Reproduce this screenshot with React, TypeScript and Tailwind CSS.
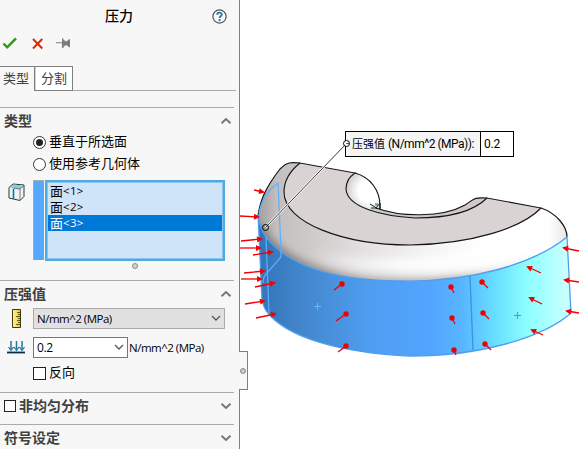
import React from "react";

const UI = "font-['Open_Sans','Noto_Sans_CJK_SC',sans-serif]";

function Chevron({ up = false }: { up?: boolean }) {
  return (
    <svg viewBox="0 0 12 8" className="h-2 w-3 shrink-0" fill="none">
      <path d={up ? "M1.500 6.200 6 2l4.500 4.200" : "M1.500 1.800 6 6l4.500-4.200"} stroke="#767676" strokeWidth="2" />
    </svg>
  );
}

function SectionHead({ title, up, check }: { title: string; up?: boolean; check?: boolean }) {
  return (
    <div className="mr-[5px] flex h-[31px] items-center border-t border-[#aaaaaa] pr-[2px] pb-1 pl-1">
      {check && <span className="mr-[3px] h-3 w-3 border border-[#222] bg-white" />}
      <h2 className="-mt-px flex-1 text-[14px] leading-5 font-bold text-[#404040]">{title}</h2>
      <Chevron up={up} />
    </div>
  );
}

function Radio({ label, checked }: { label: string; checked?: boolean }) {
  return (
    <label className="flex h-[22px] items-center gap-[3px] pl-[33px] text-[13px] text-black">
      <span className="flex h-[13px] w-[13px] items-center justify-center rounded-full border border-[#333] bg-white">
        {checked && <span className="h-[7px] w-[7px] rounded-full bg-[#222]" />}
      </span>
      {label}
    </label>
  );
}

function FaceRow({ n, selected }: { n: number; selected?: boolean }) {
  return (
    <div className={selected ? "flex h-4 items-center bg-[#0078d7] pl-[2px] leading-4 text-white" : "flex h-4 items-center pl-[2px] leading-4"}>
      <span className="font-['Noto_Sans_CJK_SC',sans-serif] text-[13px] leading-4">面</span>
      <span className="text-[11.500px] tracking-[0.3px]">&lt;{n}&gt;</span>
    </div>
  );
}

function Panel() {
  return (
    <aside className="h-full w-[240px] shrink-0 border-r border-[#808080] bg-[#f7f7f7]">
      <header className="flex h-8 items-center pr-3 pl-[26px]">
        <h1 className="-mt-px flex-1 text-center text-[14px] leading-5 font-medium text-black">压力</h1>
        <svg viewBox="0 0 15 15" className="h-[15px] w-[15px]" fill="none">
          <circle cx="7.500" cy="7.500" r="6.600" fill="#fafafa" stroke="#4b5358" strokeWidth="1.200" />
          <path d="M5.200 5.700c.1-2.800 4.700-2.700 4.600-.1 0 1.600-2.200 1.700-2.200 3.300" stroke="#1d78a5" strokeWidth="1.900" />
          <rect x="6.600" y="10.100" width="2" height="2" fill="#1d78a5" />
        </svg>
      </header>
      <div className="flex h-[34px] pt-[5px] pl-[2px]">
        <svg viewBox="0 0 70 14" className="h-[14px] w-[70px]" fill="none">
          <path d="m1.500 6.500 3.700 3.800L14 1.300" stroke="#2f9a12" strokeWidth="2.500" />
          <path d="m31 2 9.300 9.500M40.300 2 31 11.500" stroke="#de2604" strokeWidth="2" />
          <path d="M54 5.300h6V1.500h1.500V3l3 1.500L67 2.200h1v8h-1l-2.500-2.300-3 1.500V11H60V6.300h-6Z" fill="#7d7d7d" />
        </svg>
      </div>
      <nav className="mr-[3px] flex h-[25px] border-b border-[#aaaaaa] text-[13px] text-[#404040]">
        <div className="-mb-px h-[25px] w-[34px] border-t border-[#808080] bg-[#f7f7f7] pl-[3px] leading-[23px]">类型</div>
        <div className="-mb-px h-[25px] w-[39px] border border-[#808080] bg-white pl-[6px] leading-[22px] shadow-[inset_1px_0_#d2d2d2]">分割</div>
      </nav>

      <section className="mt-4 h-[173px]">
        <SectionHead title="类型" up />
        <div className="-mt-[7px]">
          <Radio label="垂直于所选面" checked />
          <Radio label="使用参考几何体" />
        </div>
        <div className="mt-[5px] flex pl-2">
          <svg viewBox="0 0 17 19" className="mt-[3px] h-[19px] w-[17px]" strokeLinejoin="round">
            <path d="M1 4.500 5 1l11 1v11.500L12 17.500 1 15Z" fill="#f1f3f3" stroke="#29363b" />
            <path d="m1.500 4.500 3.700-3L15.500 2.500 12 6Z" fill="#86cce4" />
            <path d="M6 5.200 12 6l4-3.500M12 6v11.500" fill="none" stroke="#4f5f65" strokeWidth=".8" />
            <path d="M5.500 5.500v10.500" stroke="#087ba5" strokeWidth="1.600" />
          </svg>
          <div className="ml-2 h-20 w-[11px] border-t border-l border-[#aaa] bg-[#56a8ff]" />
          <div className="ml-px h-[81px] w-[180px] border-2 border-[#50a9df] bg-[#cfe4f8] text-[12px] text-black">
            <div className="h-full border border-[#88c4ed]">
              <FaceRow n={1} />
              <FaceRow n={2} />
              <FaceRow n={3} selected />
            </div>
          </div>
        </div>
        <div className="mt-[2px] ml-[132px] h-[6px] w-[6px] rounded-full border border-[#888] bg-[#d4d4d4]" />
      </section>

      <section className="h-[112px]">
        <SectionHead title="压强值" up />
        <div className="-mt-[3px] flex h-[21px] items-center">
          <svg viewBox="0 0 9 19" className="ml-3 h-[19px] w-[9px]">
            <defs><linearGradient id="ruler"><stop stopColor="#fff4a0" /><stop offset="1" stopColor="#edc925" /></linearGradient></defs>
            <path d="M.5.5h8v18h-8Z" fill="url(#ruler)" stroke="#40380a" />
            <path d="M5 3.500h3M6 5.500h2M4 7.500h4M6 9.500h2M5 11.500h3M6 13.500h2M4 15.500h4" stroke="#40380a" strokeWidth=".8" />
          </svg>
          <div className="ml-3 flex h-[21px] w-[192px] items-center justify-between border border-[#aaa] bg-[#e1e1e1] px-[3px] text-[12px] text-black">
            <span className="text-[11.500px] tracking-[-0.5px]">N/mm^2 (MPa)</span>
            <svg viewBox="0 0 10 7" className="h-[7px] w-[10px]" fill="none"><path d="m1 1 4 4 4-4" stroke="#555" strokeWidth="1.300" /></svg>
          </div>
        </div>
        <div className="mt-2 flex h-[21px] items-center text-[12px] text-black">
          <svg viewBox="0 0 18 13" className="ml-[7px] h-[13px] w-[18px]">
            <path d="M4 0v8M9.500 0v8M15 0v8" stroke="#2278a5" strokeWidth="1.500" />
            <path d="m1.500 6 2.500 3.500L6.500 6m.5 0 2.500 3.500L12 6m.5 0L15 9.500 17.500 6" fill="none" stroke="#2278a5" strokeWidth="1.200" />
            <path d="M0 11.500h18" stroke="#102c3c" strokeWidth="1.800" />
          </svg>
          <div className="ml-2 flex h-[21px] w-[95px] items-center justify-between border border-[#777] bg-white px-[3px]">
            <span className="tracking-[-0.4px]">0.2</span>
            <svg viewBox="0 0 10 7" className="h-[7px] w-[10px]" fill="none"><path d="m1 1 4 4 4-4" stroke="#555" strokeWidth="1.300" /></svg>
          </div>
          <span className="ml-px text-[11.500px] tracking-[-0.5px]">N/mm^2 (MPa)</span>
        </div>
        <label className="mt-[5px] flex h-5 items-center gap-[3px] pl-[33px] text-[13px] text-black">
          <span className="h-[13px] w-[13px] border border-[#222] bg-white" />反向
        </label>
      </section>
      <section className="h-8"><SectionHead title="非均匀分布" check /></section>
      <section><SectionHead title="符号设定" /></section>
    </aside>
  );
}

type ArrowData = [number, number, number, number];

const arrows: ArrowData[] = [
  [254, 190, 263, 192], [240, 216, 258, 217], [241, 241, 261, 239], [240, 248, 260, 248],
  [253, 255, 272, 252], [244, 273, 264, 271], [241, 279, 261, 279], [255, 287, 274, 283],
  [245, 304, 264, 301], [256, 318, 275, 314], [334, 290, 342, 284], [336, 321, 346, 314],
  [338, 352, 346, 346], [454, 293, 451, 287], [455, 324, 452, 318], [456, 355, 454, 350],
  [488, 288, 482, 282], [489, 319, 483, 313], [491, 350, 485, 344], [541, 273, 528, 267],
  [542, 304, 530, 298], [543, 335, 532, 330], [579, 251, 564, 248], [579, 282, 565, 280],
  [579, 313, 567, 311],
];

function Arrow({ a }: { a: ArrowData }) {
  const [x1, y1, x2, y2] = a;
  const angle = (Math.atan2(y2 - y1, x2 - x1) * 180) / Math.PI;
  const facing = x1 > 330 && x1 < 500;
  return (
    <g stroke="#f20000" fill="#f20000">
      <path d={`M${x1} ${y1}L${x2} ${y2}`} strokeWidth="1.300" />
      {facing ? <circle cx={x2} cy={y2} r="2.700" stroke="none" /> : (
        <path d="M2 0-4-3v6Z" stroke="none" transform={`translate(${x2} ${y2}) rotate(${angle})`} />
      )}
    </g>
  );
}

const band = "M258 214C259 222 261 230 266 237C286 263 325 280 397 281C472 283 535 263 567 237L571 313C544 337 482 356 410 356C340 353 287 337 268 313C264 309 263 304 262 300Z";
const topFace = "M300 163C290 171 284 181 284 192C284 223 344 245 410 245C472 244 522 228 541 208L487 198C472 213 444 218 415 218C381 216 347 207 346 189C346 183 349 177 355 173Z";
const body = "M258 216C260 200 266 187 280 169C287 162 291 162 300 163L355 173L380 209C400 217 442 218 465 205C474 199 474 197 487 198L541 208C556 213 567 226 567 237C535 263 472 283 397 281C325 280 286 263 266 237C261 230 259 221 258 216Z";

function Model() {
  return (
    <svg viewBox="240 0 339 449" className="block h-[449px] w-[339px]" fill="none">
      <defs>
        <linearGradient id="body" x1="258" x2="567" y1="0" y2="0" gradientUnits="userSpaceOnUse">
          <stop stopColor="#a29e9e" /><stop offset=".06" stopColor="#c3bfbf" /><stop offset=".18" stopColor="#cfcbcb" /><stop offset=".34" stopColor="#e2e0e0" />
          <stop offset=".55" stopColor="#f5f4f4" /><stop offset=".75" stopColor="#fff" /><stop offset=".94" stopColor="#fff" /><stop offset="1" stopColor="#e8e5e5" />
        </linearGradient>
        <linearGradient id="lowerShade" x1="258" x2="560" y1="0" y2="0" gradientUnits="userSpaceOnUse">
          <stop stopColor="#777272" /><stop offset=".35" stopColor="#a19b9b" /><stop offset=".68" stopColor="#aca5a5" /><stop offset=".85" stopColor="#e7e3e3" stopOpacity=".5" /><stop offset="1" stopColor="#fff" stopOpacity="0" />
        </linearGradient>
        <linearGradient id="shine" x1="310" x2="530" y1="0" y2="0" gradientUnits="userSpaceOnUse">
          <stop stopColor="#fff" stopOpacity="0" /><stop offset=".4" stopColor="#fff" /><stop offset="1" stopColor="#fff" />
        </linearGradient>
        <linearGradient id="blue" x1="258" x2="571" y1="0" y2="0" gradientUnits="userSpaceOnUse">
          <stop stopColor="#3474b7" /><stop offset=".15" stopColor="#4387cd" /><stop offset=".35" stopColor="#4e9df0" />
          <stop offset=".54" stopColor="#52a4ff" /><stop offset=".65" stopColor="#57b5ff" /><stop offset=".76" stopColor="#69dfff" />
          <stop offset=".86" stopColor="#8bffff" /><stop offset="1" stopColor="#d0ffff" />
        </linearGradient>
        <radialGradient id="hole" cx="370" cy="191" r="26" gradientUnits="userSpaceOnUse">
          <stop stopColor="#fff" /><stop offset=".45" stopColor="#fff" /><stop offset="1" stopColor="#c9c4c4" />
        </radialGradient>
        <filter id="soft" x="-20%" y="-20%" width="140%" height="140%"><feGaussianBlur stdDeviation="4" /></filter>
        <clipPath id="bodyClip"><path d={body} /></clipPath>
      </defs>
      <path d={body} fill="url(#body)" />
      <g clipPath="url(#bodyClip)">
        <g filter="url(#soft)">
          <path d="M256 228C286 272 348 285 405 284S500 280 567 244" stroke="url(#lowerShade)" strokeWidth="10" />
          <path d="M310 251C340 263 370 265 412 264S500 254 542 229" stroke="url(#shine)" strokeWidth="10" />
        </g>
      </g>
      <path d="M355 173C370 177 380 190 380 206V209L415 218C381 216 347 207 346 189C346 183 349 177 355 173Z" fill="url(#hole)" />
      <path d="M380 209C400 217 442 218 465 205C474 199 474 197 487 198C472 213 444 218 415 218C392 216 380 213 370 208Z" fill="#d0c9c9" />
      <path d={topFace} fill="#d9d3d3" stroke="#151515" strokeWidth="1.100" />
      <path d="M258 216C260 200 266 187 280 169C287 162 291 162 300 163M355 173C370 177 380 190 380 206V209M376 208C400 217 442 218 465 205C474 199 474 197 487 198M541 208C556 213 567 226 567 237" stroke="#151515" strokeWidth="1.200" />
      <path d={band} fill="url(#blue)" stroke="#4f9eec" strokeWidth="1.300" strokeLinejoin="round" />
      <path d="M259 213C261 202 267 191 278 183L281 250V257L267 273Q263 276 263 283M266 237 269 313" stroke="#5cafff" strokeWidth="1.200" />
      <path d="M470 276 473 350" stroke="#3e91de" strokeWidth="1.300" />
      <path d="M314 306.500h7M317.500 303v7" stroke="#62b9ff" />
      <path d="M514 315.500h7M517.500 312v7" stroke="#35a5c9" />
      {arrows.map((a) => <Arrow key={`${a[0]}-${a[1]}`} a={a} />)}
      <path d="M375 203h3v3h-3Z" fill="#72c573" />
      <path d="m370 204 5 3 2 2M371 208h5M376 208l4-5v6" stroke="#172217" />
      <path d="M265.500 227.500 346.500 143.500" stroke="#fff" strokeWidth="2.200" />
      <path d="M265.500 227.500 346.500 143.500" stroke="#222" strokeWidth=".9" />
      <circle cx="265.500" cy="227.500" r="3" stroke="#000" />
    </svg>
  );
}

export default function App() {
  return (
    <main className={`relative flex h-[449px] w-[579px] overflow-hidden bg-white ${UI}`}>
      <Panel />
      <div className="relative h-full flex-1">
        <Model />
        <div className="absolute top-[131px] left-[105px] flex h-[26px] w-[169px] border border-black bg-[#f5f5f5] text-[12px] leading-6 whitespace-nowrap text-black">
          <div className="flex w-[135px] shrink-0 border-r border-black pl-[6px]">
            <span className="text-[11px]">压强值</span>
            <span className="ml-[3px] font-['Roboto',sans-serif] tracking-[-0.5px]">(N/mm^2 (MPa)):</span>
          </div>
          <div className="flex-1 bg-white pl-[3px] font-['Roboto',sans-serif] tracking-[-0.2px]">0.2</div>
        </div>
        <svg className="absolute top-[140px] left-[103px] h-[7px] w-[7px]" viewBox="0 0 7 7" fill="none"><circle cx="3.500" cy="3.500" r="3" fill="white" stroke="black" /><path d="M3 3.500h3" stroke="#555" /></svg>
      </div>
      <div className="absolute top-[351px] left-[239px] flex h-[39px] w-[9px] items-center border border-l-0 border-[#808080] bg-[#f7f7f7]">
        <span className="ml-px h-[6px] w-[6px] rounded-full border border-[#888] bg-[#ccc]" />
      </div>
    </main>
  );
}
